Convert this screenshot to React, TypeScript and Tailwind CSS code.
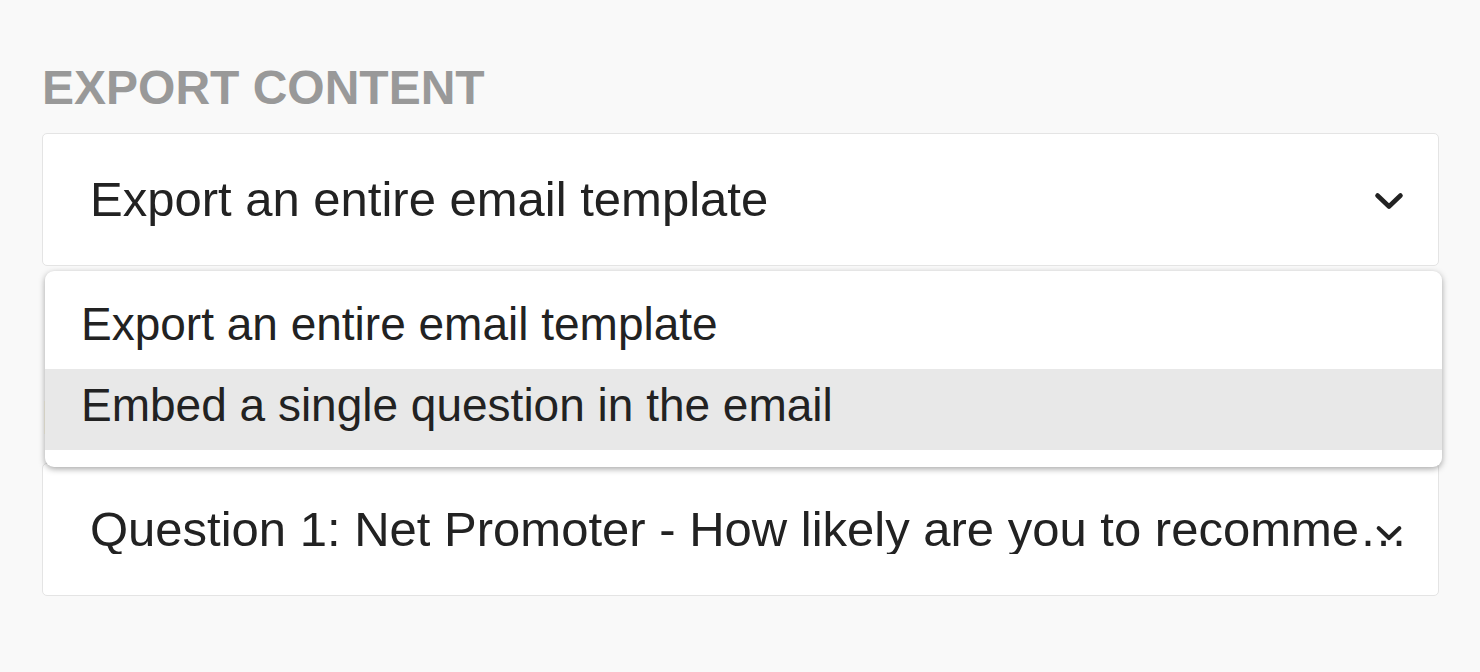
import React from 'react';

const Chevron: React.FC<{ className?: string }> = ({ className }) => (
  <svg viewBox="0 0 30 19" className={className} fill="none">
    <path d="M3.5 3.5 L15 14.5 L26.5 3.5" stroke="#222" strokeWidth="4.6" strokeLinecap="round" strokeLinejoin="round" />
  </svg>
);

const App: React.FC = () => {
  const font = { fontFamily: '"Liberation Sans", Arial, Helvetica, sans-serif' };

  return (
    <div className="min-h-screen bg-[#f9f9f9] px-[42px] pt-[60px] text-[#222]" style={font}>
      <div className="relative w-[1397px]">
        {/* Export content */}
        <h2 className="text-[48px] font-bold leading-[56px] text-[#999]">EXPORT CONTENT</h2>
        <div className="relative mt-[17px] flex h-[133px] items-center rounded-[5px] border border-[#e4e4e4] bg-white pl-[47px] pr-[80px]">
          <span className="text-[49px] leading-[49px]">Export an entire email template</span>
          <Chevron className="absolute right-[34px] top-[58px] h-[19px] w-[30px]" />
        </div>

        {/* Question */}
        <h2 className="mt-[124px] text-[48px] font-bold leading-[56px] text-[#999]">EMBED QUESTION</h2>
        <div className="relative mt-[17px] flex h-[133px] items-center rounded-[5px] border border-[#e4e4e4] bg-white pl-[47px] pr-[25px]">
          <span className="truncate text-[49px] leading-[49px]">
            Question 1: Net Promoter - How likely are you to recommend us to a friend or colleague?
          </span>
          <Chevron className="absolute right-[34px] top-[61px] h-[17px] w-[30px]" />
        </div>

        {/* Open menu */}
        <div className="absolute left-[3px] top-[211px] w-[1397px] rounded-[9px] bg-white py-[17px] shadow-[0_2px_6px_rgba(0,0,0,0.35)]">
          <div className="h-[81px] pl-[36px] text-[46px] leading-[73px]">Export an entire email template</div>
          <div className="h-[81px] bg-[#e8e8e8] pl-[36px] text-[46px] leading-[73px]">Embed a single question in the email</div>
        </div>
      </div>
    </div>
  );
};

export default App;
